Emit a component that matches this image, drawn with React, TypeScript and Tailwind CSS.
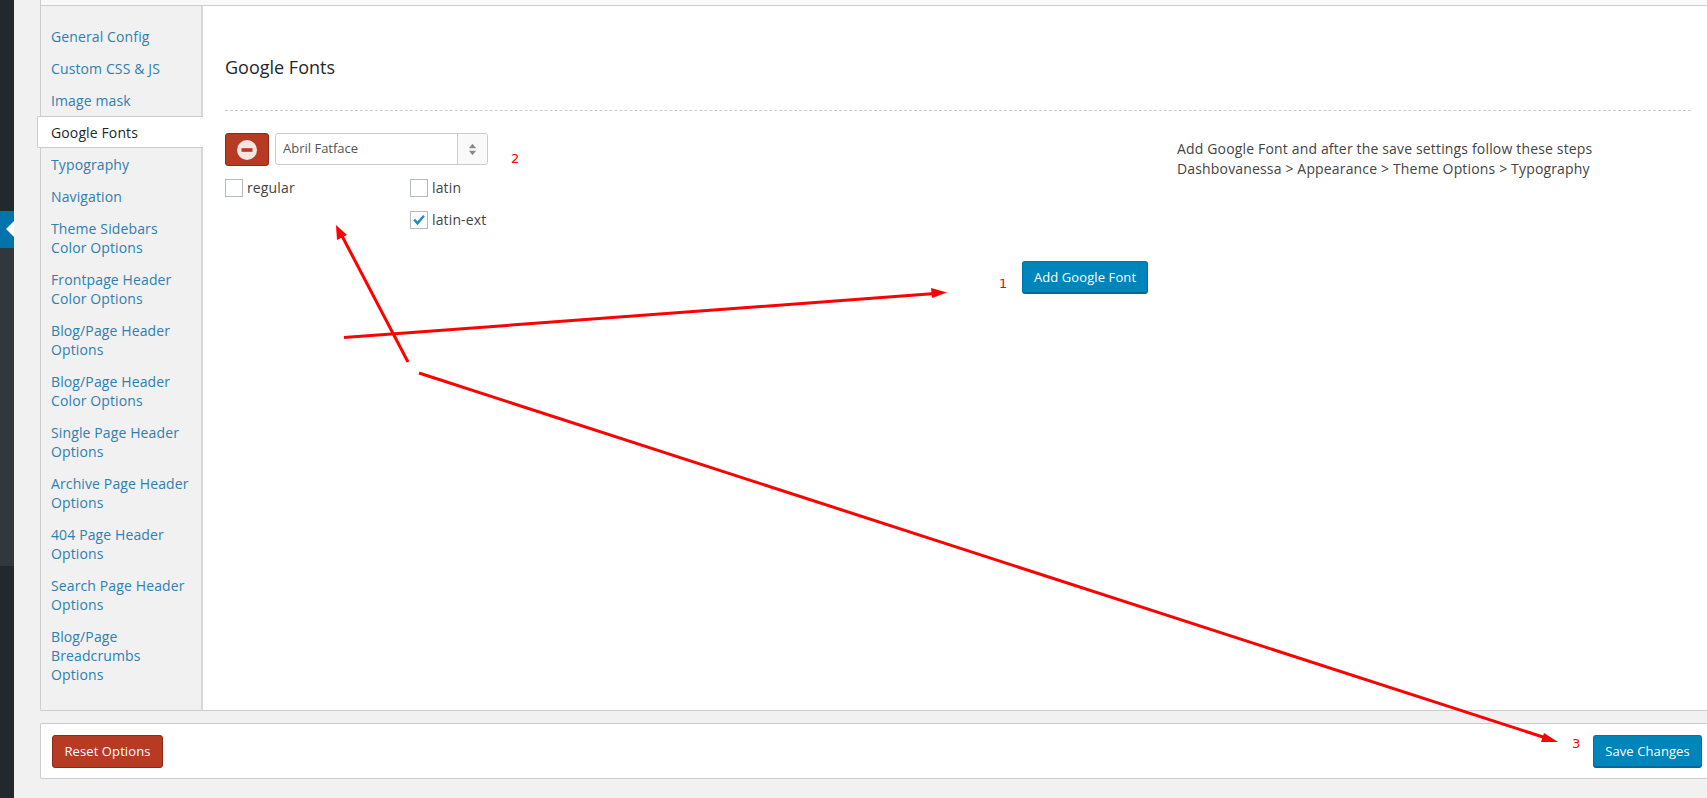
import React from "react";

const items: string[][] = [
  ["General Config"],
  ["Custom CSS & JS"],
  ["Image mask"],
  ["Google Fonts"],
  ["Typography"],
  ["Navigation"],
  ["Theme Sidebars", "Color Options"],
  ["Frontpage Header", "Color Options"],
  ["Blog/Page Header", "Options"],
  ["Blog/Page Header", "Color Options"],
  ["Single Page Header", "Options"],
  ["Archive Page Header", "Options"],
  ["404 Page Header", "Options"],
  ["Search Page Header", "Options"],
  ["Blog/Page", "Breadcrumbs", "Options"],
];

function Check({ checked, label, cls }: { checked?: boolean; label: string; cls?: string }) {
  return (
    <div className={"flex items-center gap-[4px] h-[18px] " + (cls ?? "")}>
      <span className="relative block w-[18px] h-[18px] border border-[#b4b9be] bg-white shrink-0">
        {checked && (
          <svg viewBox="0 0 16 16" className="absolute left-[1px] top-[1px] w-[14px] h-[14px]">
            <path d="M1.5 8.5 L3.5 6.5 L6.3 9.6 L12.6 2.2 L14.6 4 L6.4 14 Z" fill="#1e8cbe" />
          </svg>
        )}
      </span>
      <span className="text-[14px] leading-[18px] tracking-[0.14px] text-[#444]">{label}</span>
    </div>
  );
}

export default function App() {
  return (
    <div
      className="relative flex w-[1707px] h-[798px] overflow-hidden bg-[#f1f1f1]"
      style={{ fontFamily: '"Open Sans", sans-serif' }}
    >
      {/* admin menu edge */}
      <div className="w-[14px] shrink-0 flex flex-col bg-[#23282d]">
        <div className="h-[211px]" />
        <div className="relative h-[37px] bg-[#0073aa]">
          <span className="absolute right-0 top-[10px] w-0 h-0 border-y-[8px] border-y-transparent border-r-[8px] border-r-white" />
        </div>
        <div className="h-[318px] bg-[#32373c]" />
      </div>

      <div className="flex-1 flex flex-col pl-[26px] min-w-0">
        {/* main panel */}
        <div className="h-[711px] flex flex-col bg-white border border-t-0 border-r-0 border-[#ccc] rounded-bl-[2px]">
          <div className="h-[5px] bg-[#f9f9f9] shrink-0" />
          <div className="h-[1px] bg-[#ccc] shrink-0" />
          <div className="flex-1 flex min-h-0">
            {/* sidebar */}
            <div className="w-[162px] shrink-0 bg-[#f1f1f1] border-r-2 border-[#d8d8d8] pt-[14px] relative">
              {items.map((lines) => {
                const active = lines[0] === "Google Fonts";
                return (
                  <div
                    key={lines.join(" ")}
                    className={
                      active
                        ? "relative -ml-[4px] -mr-[2px] pl-[13px] pr-[6px] py-[5.5px] mb-0 bg-white border border-r-0 border-[#ccc] rounded-l-[2px] text-[14px] leading-[19px] tracking-[0.12px] text-[#23282d]"
                        : "pl-[10px] pr-[6px] py-[6.5px] text-[14px] leading-[19px] tracking-[0.12px] text-[#2e80b0]"
                    }
                  >
                    {lines.map((l) => (
                      <div key={l}>{l}</div>
                    ))}
                  </div>
                );
              })}
            </div>

            {/* content */}
            <div className="flex-1 min-w-0 pl-[22px] pr-[16px]">
              <h2 className="pt-[48px] h-[105px] text-[18px] leading-[26px] text-[#23282d] border-b border-dashed border-[#ccc]">
                Google Fonts
              </h2>
              <div className="flex pt-[22px]">
                <div className="w-[797px] shrink-0">
                  <div className="flex gap-[6px] h-[33px]">
                    <button className="w-[44px] h-[33px] flex items-center justify-center bg-[#b73a23] border border-[#8c2b19] rounded-[3px]">
                      <svg viewBox="0 0 20 20" className="w-[20px] h-[20px]">
                        <circle cx="10" cy="10" r="10" fill="#f6e6e3" />
                        <rect x="4.5" y="8.2" width="11" height="3.6" fill="#b73a23" />
                      </svg>
                    </button>
                    <div className="w-[213px] h-[32px] flex bg-white border border-[#ccc] rounded-[3px] overflow-hidden">
                      <div className="flex-1 pl-[7px] text-[13px] leading-[28px] text-[#555]">Abril Fatface</div>
                      <div className="w-[30px] border-l border-[#ccc] bg-[#f9f9f9] flex items-center justify-center">
                        <svg viewBox="0 0 10 14" className="w-[9px] h-[13px]">
                          <path d="M5 0.5 L9 5.5 H1 Z M1 8.5 H9 L5 13.5 Z" fill="#8a8a8a" />
                        </svg>
                      </div>
                    </div>
                  </div>
                  <div className="flex pt-[13px]">
                    <Check label="regular" cls="w-[185px]" />
                    <div className="flex flex-col gap-[14px]">
                      <Check label="latin" />
                      <Check label="latin-ext" checked />
                    </div>
                  </div>
                </div>
                <div className="w-[155px] shrink-0 pt-[128px]">
                  <button className="block w-[126px] h-[33px] bg-[#0085ba] border border-[#0073aa] border-b-[2px] border-b-[#006799] rounded-[3px] text-[13px] leading-[28px] tracking-[0.1px] font-medium text-white">
                    Add Google Font
                  </button>
                </div>
                <div className="pt-[6px] text-[14px] leading-[20px] tracking-[0.16px] text-[#444]">
                  <div>Add Google Font and after the save settings follow these steps</div>
                  <div>Dashbovanessa &gt; Appearance &gt; Theme Options &gt; Typography</div>
                </div>
              </div>
            </div>
          </div>
        </div>

        {/* footer */}
        <div className="mt-[12px] h-[56px] flex items-center justify-between pl-[11px] pr-[5px] bg-white border border-r-0 border-[#ccc] rounded-l-[2px]">
          <button className="w-[111px] h-[33px] bg-[#b73a23] border border-[#8c2b19] rounded-[3px] text-[13px] leading-[30px] tracking-[0.1px] font-medium text-white">
            Reset Options
          </button>
          <button className="w-[109px] h-[33px] bg-[#0085ba] border border-[#0073aa] border-b-[2px] border-b-[#006799] rounded-[3px] text-[13px] leading-[28px] tracking-[0.1px] font-medium text-white">
            Save Changes
          </button>
        </div>
      </div>

      {/* red annotations */}
      <svg className="absolute left-0 top-0 pointer-events-none" width="1707" height="798" viewBox="0 0 1707 798">
        <g stroke="#ff0000" strokeWidth="3" fill="none">
          <line x1="344" y1="337.5" x2="935" y2="293.5" />
          <line x1="408" y1="362" x2="341" y2="234" />
          <line x1="419" y1="373" x2="1546" y2="738" />
        </g>
        <g fill="#ff0000">
          <polygon points="947,292.5 931,288 932,298" />
          <polygon points="336,225 337,240 347,235" />
          <polygon points="1558,742 1544,733 1541,742" />
        </g>
      </svg>
      <span className="absolute left-[999px] top-[276px] text-[13px] leading-[16px] text-[#ff0000]" style={{ fontFamily: '"DejaVu Sans", sans-serif' }}>1</span>
      <span className="absolute left-[511px] top-[151px] text-[13px] leading-[16px] text-[#ff0000]" style={{ fontFamily: '"DejaVu Sans", sans-serif' }}>2</span>
      <span className="absolute left-[1572px] top-[736px] text-[13px] leading-[16px] text-[#ff0000]" style={{ fontFamily: '"DejaVu Sans", sans-serif' }}>3</span>
    </div>
  );
}
